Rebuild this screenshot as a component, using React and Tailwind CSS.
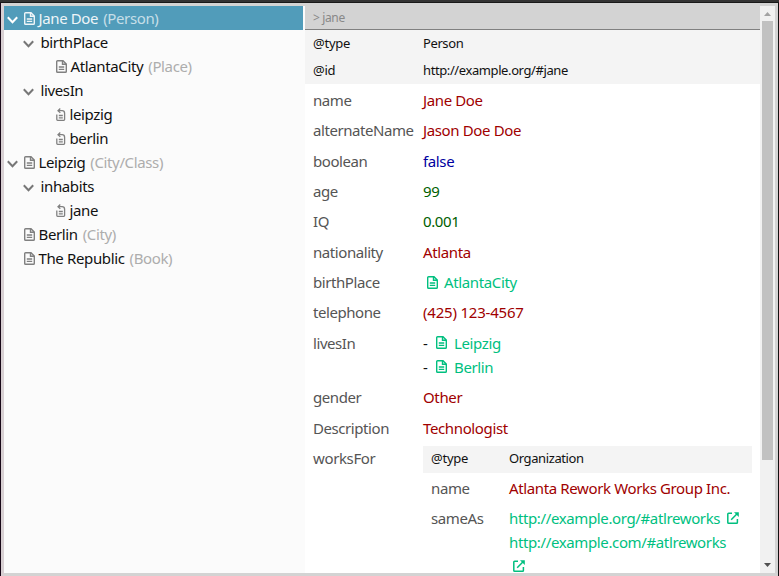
import React from "react";

function DocIcon({ className = "" }) {
  return (
    <svg viewBox="0 0 11 13" className={"h-[13px] w-[11px] shrink-0 " + className} fill="none" stroke="currentColor" strokeWidth="1.4">
      <path d="M.7 1.6Q.7.7 1.6.7H7L10.3 4V11.4Q10.3 12.3 9.4 12.3H1.6Q.7 12.3.7 11.4ZM6.5 1V4.3H10M2.8 7H8.2M2.8 9.4H8.2" />
    </svg>
  );
}

function RefIcon() {
  return (
    <svg viewBox="0 0 10 13" className="h-[13px] w-[10px] shrink-0 text-[#808080]" fill="none" stroke="currentColor" strokeWidth="1.3">
      <path d="M.8 6.5V11.5Q.8 12.3 1.6 12.3H7.8Q8.6 12.3 8.6 11.5V5.2Q8.6 2.7 6.1 2.7H2.2M4.3.5 2 2.7 4.3 4.9M2.8 7.5H6.8M2.8 9.8H6.8" />
    </svg>
  );
}

function ExternalIcon({ className = "" }) {
  return (
    <svg viewBox="0 0 12 12" className={"inline-block h-3 w-3 " + className} fill="none" stroke="currentColor" strokeWidth="1.5">
      <path d="M5 1.3H1.6Q.8 1.3.8 2.1V10.4Q.8 11.2 1.6 11.2H9.6Q10.4 11.2 10.4 10.4V7M4.2 7.8 10.6 1.3" />
      <path d="M7 .3H11.8V5Z" fill="currentColor" stroke="none" />
    </svg>
  );
}

function Chevron({ className }) {
  return (
    <svg viewBox="0 0 11 8" className={"h-2 w-[11px] shrink-0 " + className} fill="none" stroke="currentColor" strokeWidth="2">
      <path d="M.8 1.2 5.5 6.2 10.2 1.2" />
    </svg>
  );
}

function Resource({ name, type, open, selected, pad = "pl-[2.5px]" }) {
  return (
    <div className={"flex h-6 items-center " + pad + (selected ? " mr-0.5 bg-[#519cba] text-[#eef5f8]" : "")}>
      {open !== undefined && (
        <span className="flex w-[17px] shrink-0">
          {open && <Chevron className={"translate-y-0.5 " + (selected ? "text-white" : "text-[#777]")} />}
        </span>
      )}
      <DocIcon className={selected ? "" : "text-[#808080]"} />
      <span className="ml-1">{name}</span>
      <span className={"ml-[5px] " + (selected ? "text-[#c6dfe8]" : "text-[#adadad]")}>({type})</span>
    </div>
  );
}

function Property({ name }) {
  return (
    <div className="flex h-6 items-center pl-[18.5px]">
      <Chevron className="translate-y-0.5 text-[#777]" />
      <span className="ml-[7px]">{name}</span>
    </div>
  );
}

function Reference({ name }) {
  return (
    <div className="flex h-6 items-center pl-[51.5px]">
      <RefIcon />
      <span className="ml-[4px]">{name}</span>
    </div>
  );
}

function Row({ label, children, color = "text-[#a00000]" }) {
  return (
    <div className="flex py-[3.2px] leading-6">
      <div className="w-[110px] shrink-0 tracking-[-0.43px] text-[#555]">{label}</div>
      <div className={color}>{children}</div>
    </div>
  );
}

function MetaRow({ label, value, width }) {
  return (
    <div className="flex h-[27px] items-center bg-[#f4f4f4] pl-2 text-[13px] tracking-[-0.4px] text-[#111]">
      <div className={"shrink-0 tracking-[-0.25px] " + width}>{label}</div>
      <div>{value}</div>
    </div>
  );
}

export default function App() {
  return (
    <div className="flex h-[576px] w-[779px] flex-col overflow-hidden bg-[#d3d3d3] font-['Noto_Sans','Open_Sans',sans-serif] text-[15px] tracking-[-0.37px] whitespace-nowrap text-[#111]">
      <div className="h-[3px] shrink-0 border-b border-[#181818] bg-[#333]" />
      <div className="flex min-h-0 flex-1">
        <div className="w-px bg-[#180818]" />
        <div className="w-[3px] bg-[#d8d0d3]" />
        <nav className="mt-[3px] mb-[3px] w-[301px] shrink-0 bg-[#fbfbfb]">
          <Resource name="Jane Doe" type="Person" open selected />
          <Property name="birthPlace" />
          <Resource name="AtlantaCity" type="Place" pad="pl-[51.5px]" />
          <Property name="livesIn" />
          <Reference name="leipzig" />
          <Reference name="berlin" />
          <Resource name="Leipzig" type="City/Class" open />
          <Property name="inhabits" />
          <Reference name="jane" />
          <Resource name="Berlin" type="City" open={false} />
          <Resource name="The Republic" type="Book" open={false} />
        </nav>
        <main className="mb-[3px] w-[455px] shrink-0 overflow-hidden bg-white">
          <header className="flex h-[27px] items-center border-b border-[#808080] bg-[#d3d3d3] pt-[3px] pl-2 text-[12px] text-[#888]">
            &gt; jane
          </header>
          <MetaRow label="@type" value="Person" width="w-[110px]" />
          <MetaRow label="@id" value="http://example.org/#jane" width="w-[110px]" />
          <div className="pt-[0.6px] pl-2">
            <Row label="name">Jane Doe</Row>
            <Row label="alternateName">Jason Doe Doe</Row>
            <Row label="boolean" color="text-[#0000a0]">false</Row>
            <Row label="age" color="text-[#006000]">99</Row>
            <Row label="IQ" color="text-[#006000]">0.001</Row>
            <Row label="nationality">Atlanta</Row>
            <Row label="birthPlace" color="text-[#00bf7f]">
              <div className="flex items-center pl-1"><DocIcon /><span className="ml-1.5">AtlantaCity</span></div>
            </Row>
            <Row label="telephone"><span className="tracking-[-0.2px]">(425) 123-4567</span></Row>
            <Row label="livesIn" color="text-[#00bf7f]">
              <div className="flex items-center"><span className="w-[13px] text-[#111]">-</span><DocIcon /><span className="ml-[7px]">Leipzig</span></div>
              <div className="flex items-center"><span className="w-[13px] text-[#111]">-</span><DocIcon /><span className="ml-[7px]">Berlin</span></div>
            </Row>
            <Row label="gender">Other</Row>
            <Row label="Description">Technologist</Row>
            <div className="flex">
              <div className="w-[110px] shrink-0 pt-[3.2px] leading-6 text-[#555]">worksFor</div>
              <div className="w-[329px] pt-[3px]">
                <MetaRow label="@type" value="Organization" width="w-[78px]" />
                <div className="flex pt-[3px] pl-2 leading-6">
                  <div className="w-[78px] shrink-0 text-[#555]">name</div>
                  <div className="text-[#a00000]">Atlanta Rework Works Group Inc.</div>
                </div>
                <div className="flex pt-1.5 pl-2 leading-6">
                  <div className="w-[78px] shrink-0 text-[#555]">sameAs</div>
                  <div className="text-[#00bf7f]">
                    <div className="flex items-center">http://example.org/#atlreworks<ExternalIcon className="ml-[7px]" /></div>
                    <div>http://example.com/#atlreworks</div>
                    <div className="flex h-6 items-center"><ExternalIcon className="ml-1" /></div>
                  </div>
                </div>
              </div>
            </div>
          </div>
        </main>
        <aside className="mt-[3px] mb-[3px] flex w-[15px] shrink-0 flex-col items-center bg-[#f1f1f1]">
          <svg viewBox="0 0 15 15" className="h-[15px] w-[15px] shrink-0"><path d="M4 10 7.5 6 11 10Z" fill="#a3a3a3" /></svg>
          <div className="h-[439px] w-[11px] bg-[#c1c1c1]" />
          <svg viewBox="0 0 15 15" className="mt-auto h-[15px] w-[15px] shrink-0"><path d="M4 5 7.5 9 11 5Z" fill="#505050" /></svg>
        </aside>
        <div className="w-[3px] shrink-0 bg-[#d3d3d3]" />
        <div className="w-px shrink-0 bg-[#111]" />
      </div>
    </div>
  );
}
